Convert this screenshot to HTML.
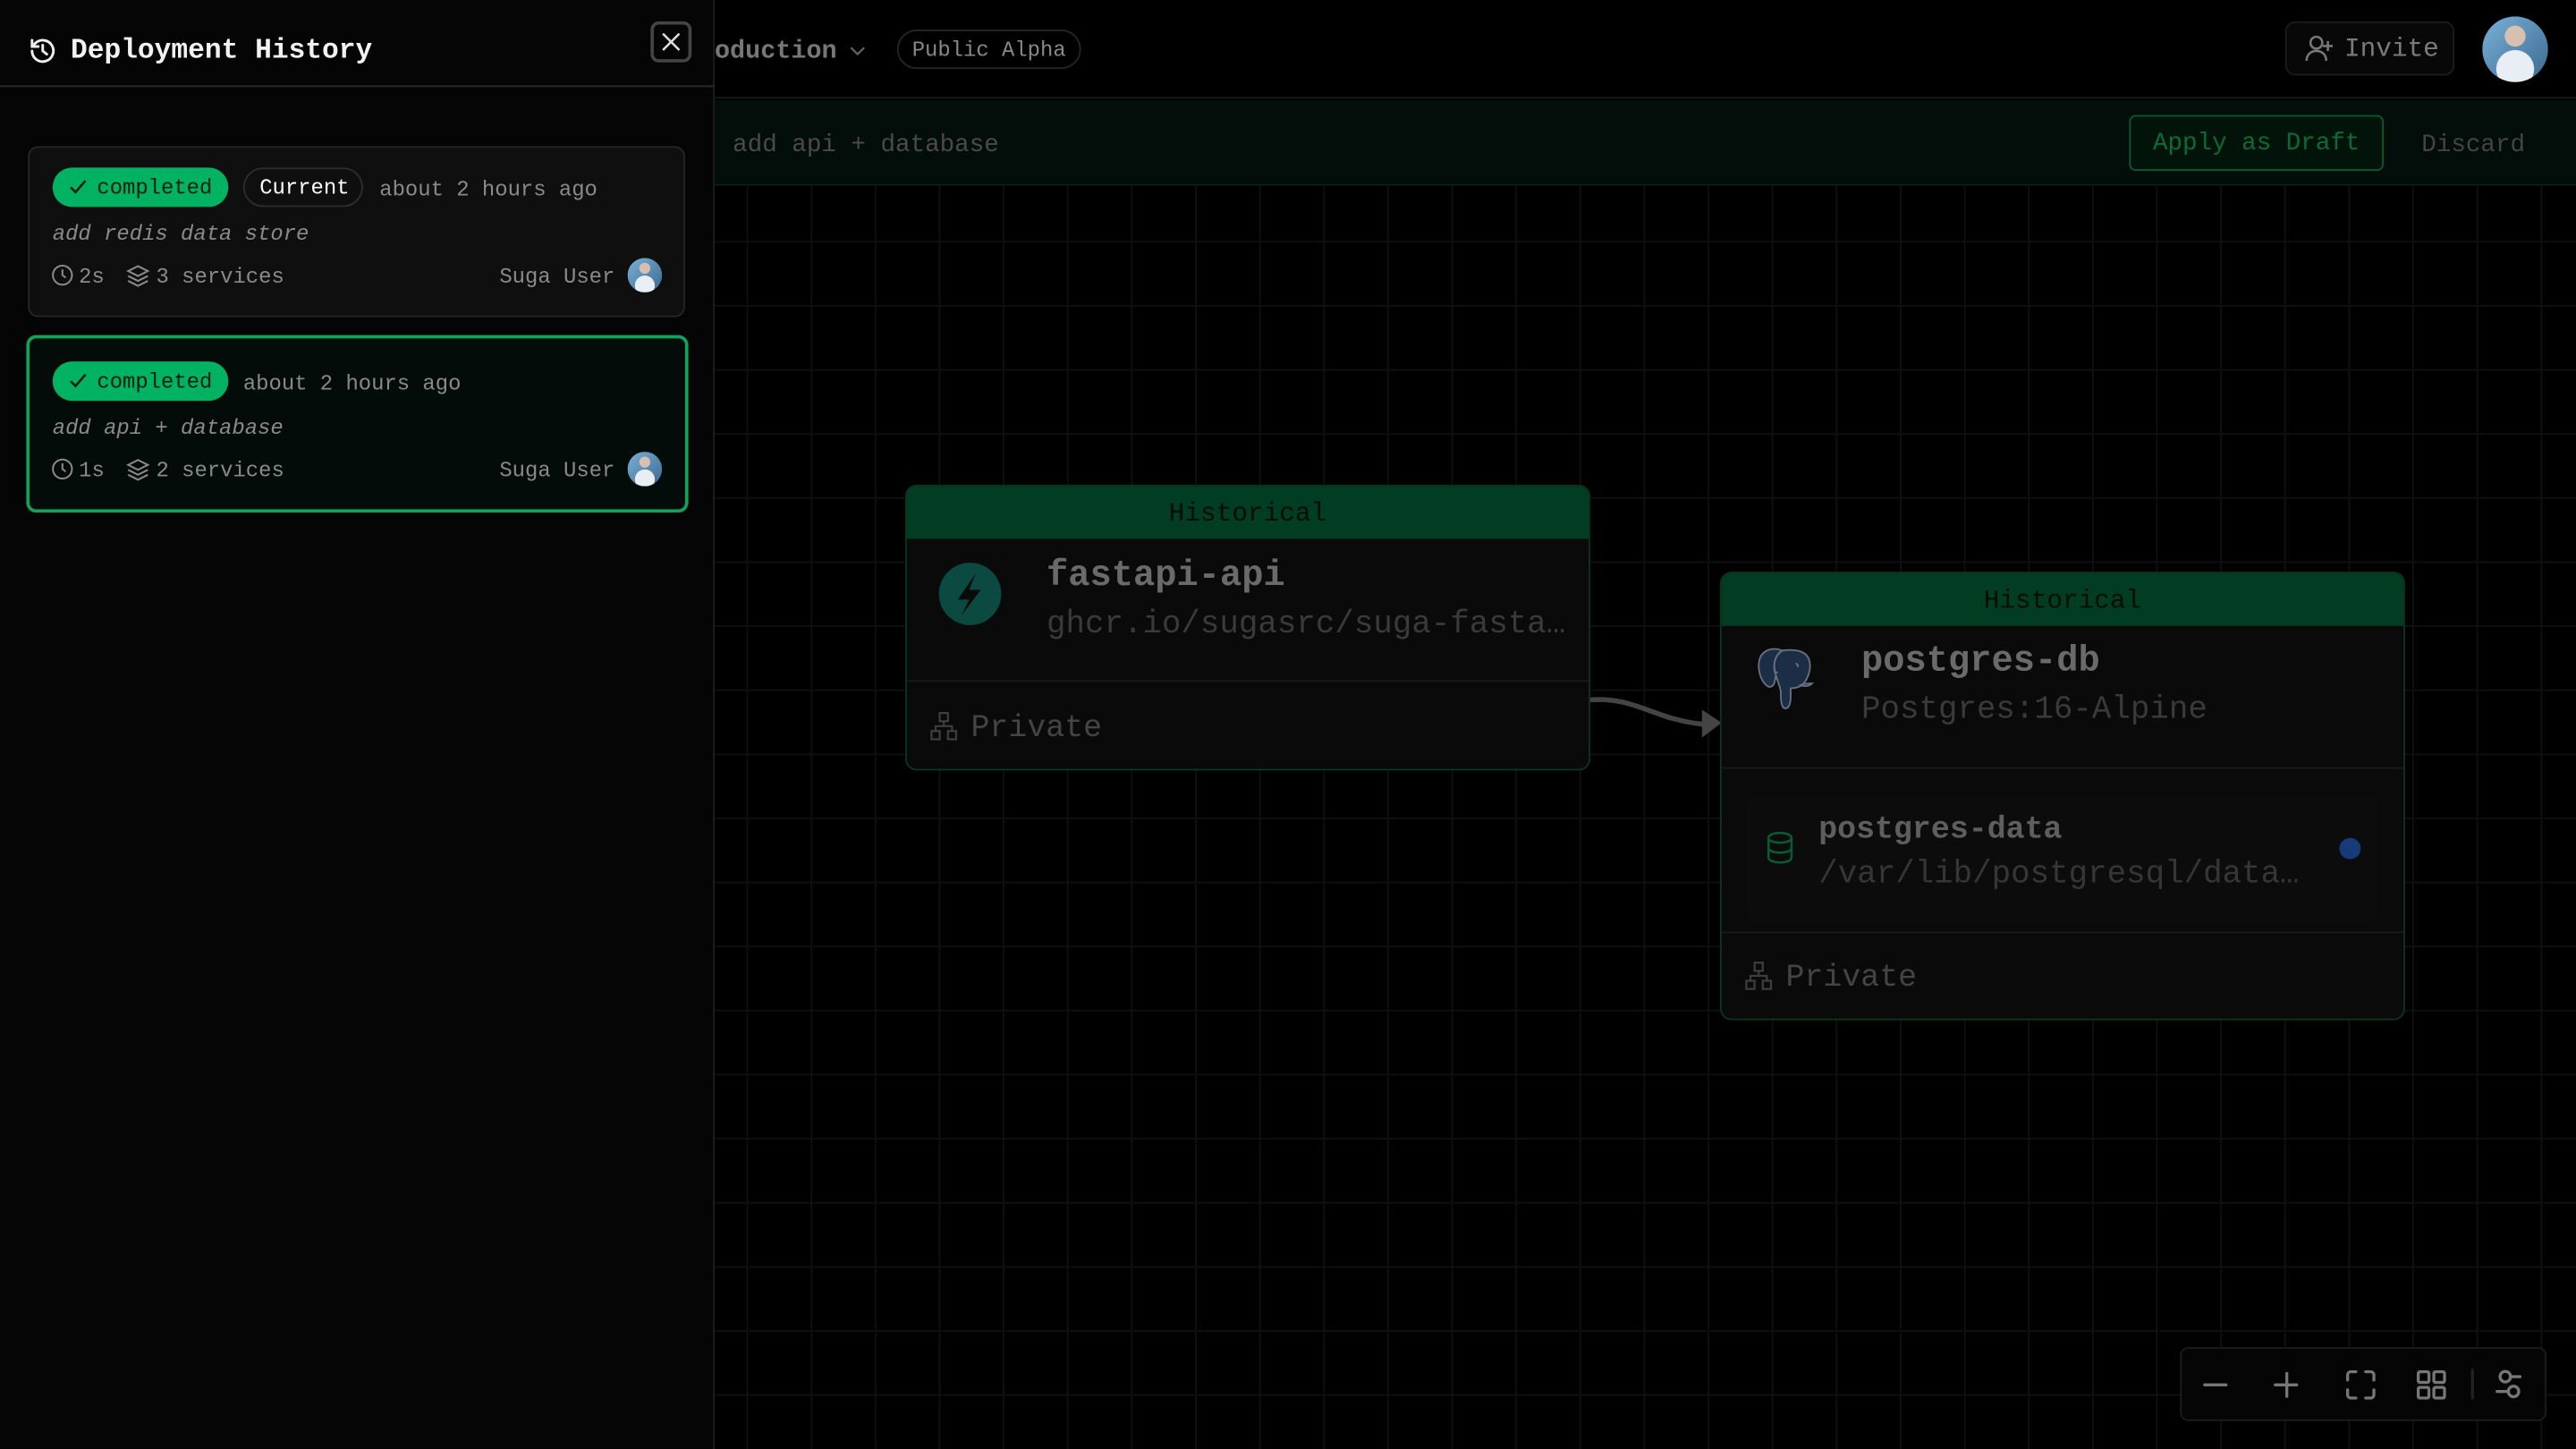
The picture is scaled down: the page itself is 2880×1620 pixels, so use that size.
<!DOCTYPE html>
<html><head><meta charset="utf-8">
<style>
*{margin:0;padding:0;box-sizing:border-box}
html,body{width:2880px;height:1620px;overflow:hidden;background:#000}
#s{position:absolute;left:0;top:0;width:1568px;height:882px;transform:scale(1.8367);transform-origin:0 0;font-family:"Liberation Mono",monospace;background:#000}
.a{position:absolute;white-space:nowrap}
.grid{position:absolute;left:435px;top:113px;right:0;bottom:0;
background-image:linear-gradient(to right,#0f0f0f 1px,transparent 1px),linear-gradient(to bottom,#0f0f0f 1px,transparent 1px);
background-size:39px 39px;background-position:19.4px -5.4px}
.pill{position:absolute;border-radius:12px;font-size:13px;line-height:24px;height:24px;padding:0 9px}
.card{position:absolute;border-radius:6px}
.node{position:absolute;background:#0a0a0a;border:1.5px solid #0b3521;border-radius:7px;overflow:hidden}
.nh{height:32px;background:#003d22;color:#050d08;text-align:center;font-size:16px;line-height:34px}
.av{position:absolute;border-radius:50%;background:radial-gradient(circle at 50% 30%,#d8c0b0 0 18%,transparent 19%),radial-gradient(circle at 50% 80%,#e8eef4 0 30%,transparent 31%),linear-gradient(135deg,#7ab0d8,#3a6a90)}
</style></head><body><div id="s">
<div class="grid"></div>
<!-- top bar -->
<div class="a" style="left:435px;top:0;right:0;height:60px;background:#000;border-bottom:1px solid #1a1a1a"></div>
<div class="a" style="left:435px;top:22px;font-size:15.5px;font-weight:bold;color:#777">oduction</div>
<svg class="a" style="left:517px;top:27px" width="10" height="8" viewBox="0 0 10 8"><path d="M1 2l4 4 4-4" fill="none" stroke="#666" stroke-width="1.2"/></svg>
<div class="a" style="left:546px;top:18px;width:112px;height:24px;border:1px solid #262626;border-radius:12px;font-size:13px;line-height:24px;color:#888;text-align:center">Public Alpha</div>
<div class="a" style="left:1391px;top:13px;width:103px;height:33px;border:1px solid #1c1c1c;background:#080808;border-radius:6px"></div>
<svg class="a" style="left:1403px;top:21px" width="18" height="17" viewBox="0 0 18 17"><circle cx="7" cy="5" r="3.6" fill="none" stroke="#777" stroke-width="1.4"/><path d="M1 16c0-4 3-6 6-6s6 2 6 6M14 4v6M11 7h6" fill="none" stroke="#777" stroke-width="1.4"/></svg>
<div class="a" style="left:1427px;top:21px;font-size:16px;color:#7a7a7a">Invite</div>
<div class="av" style="left:1511px;top:10px;width:40px;height:40px"></div>
<!-- toolbar -->
<div class="a" style="left:435px;top:61px;right:0;height:52px;background:#030e0a;border-bottom:1px solid #0a2016"></div>
<div class="a" style="left:446px;top:80px;font-size:15px;color:#4a4a4a">add api + database</div>
<div class="a" style="left:1296px;top:70px;width:155px;height:34px;border:1.5px solid #0a5a32;border-radius:4px;background:#021409;color:#0b6a3a;font-size:15px;line-height:33px;text-align:center">Apply as Draft</div>
<div class="a" style="left:1474px;top:80px;font-size:15px;color:#444">Discard</div>
<!-- fastapi node -->
<div class="node" style="left:551px;top:295px;width:417px;height:174px">
<div class="nh">Historical</div>
<div style="position:absolute;left:0;right:0;top:118px;border-top:1px solid #1a1a1a"></div>
</div>
<svg class="a" style="left:571px;top:342px" width="39" height="39" viewBox="0 0 39 39"><circle cx="19.5" cy="19.5" r="19" fill="#0b4a40"/><path d="M23 7 12 23h7l-5 10 12-16h-7z" fill="#0a0a0a"/></svg>
<div class="a" style="left:637px;top:338px;font-size:22px;font-weight:bold;color:#6a6a6a">fastapi-api</div>
<div class="a" style="left:637px;top:369px;font-size:19.5px;color:#3a3a3a">ghcr.io/sugasrc/suga-fasta…</div>
<svg class="a" style="left:566px;top:433px" width="17" height="18" viewBox="0 0 17 18" fill="none" stroke="#3e3e3e" stroke-width="1.2"><rect x="6" y="1" width="5" height="5"/><rect x="1" y="12" width="5" height="5"/><rect x="11" y="12" width="5" height="5"/><path d="M8.5 6v3M3.5 12V9h10v3"/></svg>
<div class="a" style="left:591px;top:432px;font-size:19px;color:#444">Private</div>
<!-- arrow -->
<svg class="a" style="left:966px;top:418px" width="84" height="34" viewBox="0 0 84 34"><path d="M2 8C30 6 40 20 72 23" fill="none" stroke="#444" stroke-width="3"/><path d="M70 14l12 8-12 9z" fill="#444"/></svg>
<!-- postgres node -->
<div class="node" style="left:1047px;top:348px;width:417px;height:273px">
<div class="nh">Historical</div>
<div style="position:absolute;left:0;right:0;top:118px;border-top:1px solid #1a1a1a"></div>
<div style="position:absolute;left:0;right:0;top:218px;border-top:1px solid #1a1a1a"></div>
<div style="position:absolute;left:15px;top:136px;width:384px;height:76px;background:#0c0c0c;border-radius:6px"></div>
</div>
<svg class="a" style="left:1068px;top:393px" width="38" height="42" viewBox="0 0 38 42"><g fill="#1c2e45" stroke="#6a7080" stroke-width="1"><path d="M4 6c-3 6-1 14 3 18 2 2 4 1 5-1l1-5C11 12 12 6 17 3 12 1 7 2 4 6z"/><path d="M17 3c-5 3-6 9-4 15 1 4 2 5 3 10 0 4 0 9 2 10 3 1 4-3 4-7v-5c3 0 6-1 8-3 3-4 5-10 3-15-2-5-9-6-16-5z"/><path d="M28 24c2 1 5 1 7-1-2 0-5 0-7 1z"/></g><path d="M12 13c0 3 1 4 2 3M25 11c1 0 2 1 1 2" stroke="#6a7080" fill="none" stroke-width="1"/></svg>
<div class="a" style="left:1133px;top:390px;font-size:22px;font-weight:bold;color:#6a6a6a">postgres-db</div>
<div class="a" style="left:1133px;top:421px;font-size:19.5px;color:#3a3a3a">Postgres:16-Alpine</div>
<svg class="a" style="left:1075px;top:506px" width="17" height="20" viewBox="0 0 17 20" fill="none" stroke="#0b5a30" stroke-width="1.4"><ellipse cx="8.5" cy="4" rx="7" ry="3"/><path d="M1.5 4v12c0 1.7 3 3 7 3s7-1.3 7-3V4M1.5 10c0 1.7 3 3 7 3s7-1.3 7-3"/></svg>
<div class="a" style="left:1107px;top:494px;font-size:19px;font-weight:bold;color:#5e5e5e">postgres-data</div>
<div class="a" style="left:1107px;top:521px;font-size:19.5px;color:#363636">/var/lib/postgresql/data…</div>
<div class="a" style="left:1424px;top:510px;width:13px;height:13px;border-radius:50%;background:#173a78"></div>
<svg class="a" style="left:1062px;top:585px" width="17" height="18" viewBox="0 0 17 18" fill="none" stroke="#3e3e3e" stroke-width="1.2"><rect x="6" y="1" width="5" height="5"/><rect x="1" y="12" width="5" height="5"/><rect x="11" y="12" width="5" height="5"/><path d="M8.5 6v3M3.5 12V9h10v3"/></svg>
<div class="a" style="left:1087px;top:584px;font-size:19px;color:#444">Private</div>
<!-- controls -->
<div class="a" style="left:1327px;top:820px;width:223px;height:45px;border:1px solid #1c1c1c;border-radius:5px;background:#050505"></div>
<svg class="a" style="left:1327px;top:820px" width="223" height="45" viewBox="0 0 223 45" fill="none" stroke="#777" stroke-width="1.8" stroke-linecap="round"><path d="M15 23h13M58 23h13M65 16v14"/><path d="M102 20v-3a2 2 0 0 1 2-2h3M113 15h3a2 2 0 0 1 2 2v3M118 26v3a2 2 0 0 1-2 2h-3M107 31h-3a2 2 0 0 1-2-2v-3"/><rect x="145" y="15" width="6.5" height="6.5" rx="1"/><rect x="154.5" y="15" width="6.5" height="6.5" rx="1"/><rect x="145" y="24.5" width="6.5" height="6.5" rx="1"/><rect x="154.5" y="24.5" width="6.5" height="6.5" rx="1"/><path d="M178 14v17" stroke="#222"/><circle cx="198" cy="18" r="3.2"/><path d="M201 18h6M193 27h7"/><circle cx="203" cy="27" r="3.2"/></svg>
<!-- sidebar -->
<div class="a" style="left:0;top:0;width:435px;height:882px;background:#050505;border-right:1px solid #1e1e1e"></div>
<div class="a" style="left:0;top:52px;width:435px;border-top:1px solid #2a2a2a"></div>
<svg class="a" style="left:17px;top:22px" width="18" height="18" viewBox="0 0 18 18" fill="none" stroke="#eee" stroke-width="1.6" stroke-linecap="round"><path d="M2.5 9A6.5 6.5 0 1 0 4.5 4.3L2.5 6.3M2.5 2.5v3.8h3.8M9 5.5V9l2.5 2"/></svg>
<div class="a" style="left:43px;top:22px;font-size:17px;font-weight:bold;color:#f2f2f2">Deployment History</div>
<div class="a" style="left:396px;top:13px;width:25px;height:25px;border:2px solid #444;border-radius:5px"></div>
<svg class="a" style="left:402px;top:19px" width="13" height="13" viewBox="0 0 13 13"><path d="M1.5 1.5l10 10M11.5 1.5l-10 10" stroke="#ddd" stroke-width="1.4"/></svg>
<!-- card1 -->
<div class="card" style="left:17px;top:89px;width:400px;height:104px;background:#0f0f0f;border:1px solid #262626"></div>
<div class="pill" style="left:32px;top:102px;background:#00b261;color:#03200f;padding:0 0 0 27px;width:107px;line-height:25px">completed</div>
<svg class="a" style="left:42px;top:109px" width="11" height="10" viewBox="0 0 11 10"><path d="M1 5l3 3 6-7" fill="none" stroke="#03200f" stroke-width="1.4"/></svg>
<div class="pill" style="left:148px;top:102px;width:73px;border:1px solid #2e2e2e;color:#fff;line-height:23px">Current</div>
<div class="a" style="left:231px;top:108px;font-size:13px;color:#8a8a8a">about 2 hours ago</div>
<div class="a" style="left:32px;top:135px;font-size:13px;font-style:italic;color:#8a8a8a">add redis data store</div>
<div class="a" style="left:48px;top:161px;font-size:13px;color:#8a8a8a">2s</div>
<div class="a" style="left:95px;top:161px;font-size:13px;color:#8a8a8a">3 services</div>
<div class="a" style="left:304px;top:161px;font-size:13px;color:#8a8a8a">Suga User</div>
<div class="av" style="left:382px;top:157px;width:21px;height:21px"></div>
<!-- card2 -->
<div class="card" style="left:16px;top:204px;width:403px;height:108px;background:#030c09;border:2px solid #0fa35c"></div>
<div class="pill" style="left:32px;top:220px;background:#00b261;color:#03200f;padding:0 0 0 27px;width:107px;line-height:25px">completed</div>
<svg class="a" style="left:42px;top:227px" width="11" height="10" viewBox="0 0 11 10"><path d="M1 5l3 3 6-7" fill="none" stroke="#03200f" stroke-width="1.4"/></svg>
<div class="a" style="left:148px;top:226px;font-size:13px;color:#8a8a8a">about 2 hours ago</div>
<div class="a" style="left:32px;top:253px;font-size:13px;font-style:italic;color:#8a8a8a">add api + database</div>
<div class="a" style="left:48px;top:279px;font-size:13px;color:#8a8a8a">1s</div>
<div class="a" style="left:95px;top:279px;font-size:13px;color:#8a8a8a">2 services</div>
<div class="a" style="left:304px;top:279px;font-size:13px;color:#8a8a8a">Suga User</div>
<div class="av" style="left:382px;top:275px;width:21px;height:21px"></div>
<!-- small icons in cards -->
<svg class="a" style="left:31px;top:160px" width="62" height="15" viewBox="0 0 62 15" fill="none" stroke="#8a8a8a" stroke-width="1.1"><circle cx="7" cy="7.5" r="5.8"/><path d="M7 4v3.5l2 1.5"/><path d="M53 2l-6 3 6 3 6-3zM47 8l6 3 6-3M47 11l6 3 6-3"/></svg>
<svg class="a" style="left:31px;top:278px" width="62" height="15" viewBox="0 0 62 15" fill="none" stroke="#8a8a8a" stroke-width="1.1"><circle cx="7" cy="7.5" r="5.8"/><path d="M7 4v3.5l2 1.5"/><path d="M53 2l-6 3 6 3 6-3zM47 8l6 3 6-3M47 11l6 3 6-3"/></svg>
</div></body></html>
